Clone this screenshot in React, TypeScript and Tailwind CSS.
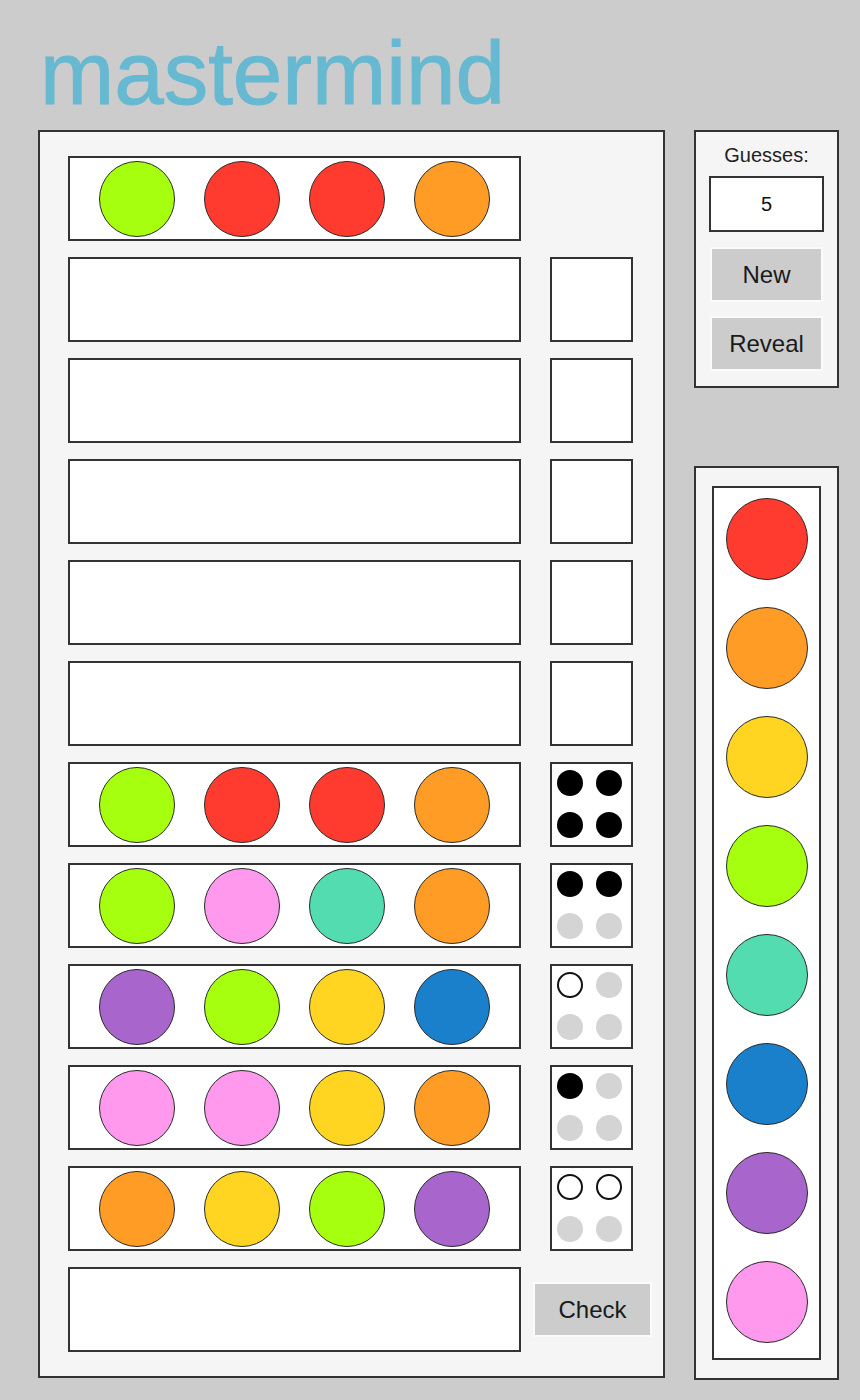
const C: Record<string, string> = {
  red: "bg-[#ff3b30]",
  orange: "bg-[#ff9c26]",
  yellow: "bg-[#ffd522]",
  green: "bg-[#a5ff0f]",
  teal: "bg-[#52dcb0]",
  blue: "bg-[#1b80cc]",
  purple: "bg-[#a866cc]",
  pink: "bg-[#ff99ee]",
};

type Fb = "b" | "w" | "e";

const rows: { pegs: string[]; fb: Fb[] }[] = [
  { pegs: [], fb: [] },
  { pegs: [], fb: [] },
  { pegs: [], fb: [] },
  { pegs: [], fb: [] },
  { pegs: [], fb: [] },
  { pegs: ["green", "red", "red", "orange"], fb: ["b", "b", "b", "b"] },
  { pegs: ["green", "pink", "teal", "orange"], fb: ["b", "b", "e", "e"] },
  { pegs: ["purple", "green", "yellow", "blue"], fb: ["w", "e", "e", "e"] },
  { pegs: ["pink", "pink", "yellow", "orange"], fb: ["b", "e", "e", "e"] },
  { pegs: ["orange", "yellow", "green", "purple"], fb: ["w", "w", "e", "e"] },
];

const palette = ["red", "orange", "yellow", "green", "teal", "blue", "purple", "pink"];

function Peg({ color }: { color: string }) {
  return <div className={`w-[76px] h-[76px] rounded-full border-[1.5px] border-[#2a2a2a] ${C[color]}`} />;
}

function PegBox({ pegs }: { pegs: string[] }) {
  return (
    <div className="w-[453px] h-[85px] border-2 border-[#333] bg-white flex items-center justify-evenly">
      {pegs.map((p, i) => (
        <Peg key={i} color={p} />
      ))}
    </div>
  );
}

function FeedbackBox({ fb }: { fb: Fb[] }) {
  return (
    <div className="w-[83px] h-[85px] border-2 border-[#333] bg-white">
      {fb.length > 0 && (
        <div className="grid grid-cols-2 w-fit gap-x-[13px] gap-y-[16px] pl-[5px] pt-[6px]">
          {fb.map((f, i) => (
            <div
              key={i}
              className={
                f === "b"
                  ? "w-[26px] h-[26px] rounded-full bg-black"
                  : f === "w"
                  ? "w-[26px] h-[26px] rounded-full bg-white border-2 border-[#111]"
                  : "w-[26px] h-[26px] rounded-full bg-[#d4d4d4]"
              }
            />
          ))}
        </div>
      )}
    </div>
  );
}

function GrayButton({ label, className }: { label: string; className: string }) {
  return (
    <button
      className={`bg-[#cccccc] border-2 border-[#fbfbfb] text-[24px] text-[#1a1a1a] flex items-center justify-center ${className}`}
    >
      {label}
    </button>
  );
}

export default function App() {
  return (
    <div className="w-[860px] min-h-[1400px] bg-[#cccccc] font-['Liberation_Sans',Arial,sans-serif] pt-[29px]">
      <h1 className="pl-[40px] text-[89px] leading-none text-[#66b9d1] [-webkit-text-stroke:1px_#66b9d1]">mastermind</h1>
      <div className="flex items-start mt-[12px] pl-[38px] gap-[29px]">
        <div className="w-[627px] h-[1248px] border-2 border-[#333] bg-[#f5f5f5] pl-[28px] pt-[24px] flex flex-col gap-[16px]">
          <PegBox pegs={["green", "red", "red", "orange"]} />
          {rows.map((r, i) => (
            <div key={i} className="flex gap-[29px]">
              <PegBox pegs={r.pegs} />
              <FeedbackBox fb={r.fb} />
            </div>
          ))}
          <div className="flex items-center">
            <PegBox pegs={[]} />
            <GrayButton label="Check" className="ml-[12px] w-[119px] h-[55px]" />
          </div>
        </div>

        <div className="flex flex-col w-[145px] gap-[78px]">
          <div className="h-[258px] border-2 border-[#333] bg-[#f5f5f5] px-[14px] pt-[12px] flex flex-col items-center">
            <div className="text-[20px] text-[#222] leading-[22px]">Guesses:</div>
            <div className="mt-[10px] w-[115px] h-[56px] border-2 border-[#333] bg-white flex items-center justify-center text-[20px] text-[#111]">
              5
            </div>
            <GrayButton label="New" className="mt-[15px] w-[113px] h-[55px]" />
            <GrayButton label="Reveal" className="mt-[14px] w-[113px] h-[55px]" />
          </div>

          <div className="h-[914px] border-2 border-[#333] bg-[#f5f5f5] pl-[16px] pt-[18px]">
            <div className="w-[109px] h-[874px] border-2 border-[#333] bg-white flex flex-col items-center pt-[10px] gap-[27px]">
              {palette.map((p) => (
                <div key={p} className={`w-[82px] h-[82px] shrink-0 rounded-full border-[1.5px] border-[#2a2a2a] ${C[p]}`} />
              ))}
            </div>
          </div>
        </div>
      </div>
    </div>
  );
}
